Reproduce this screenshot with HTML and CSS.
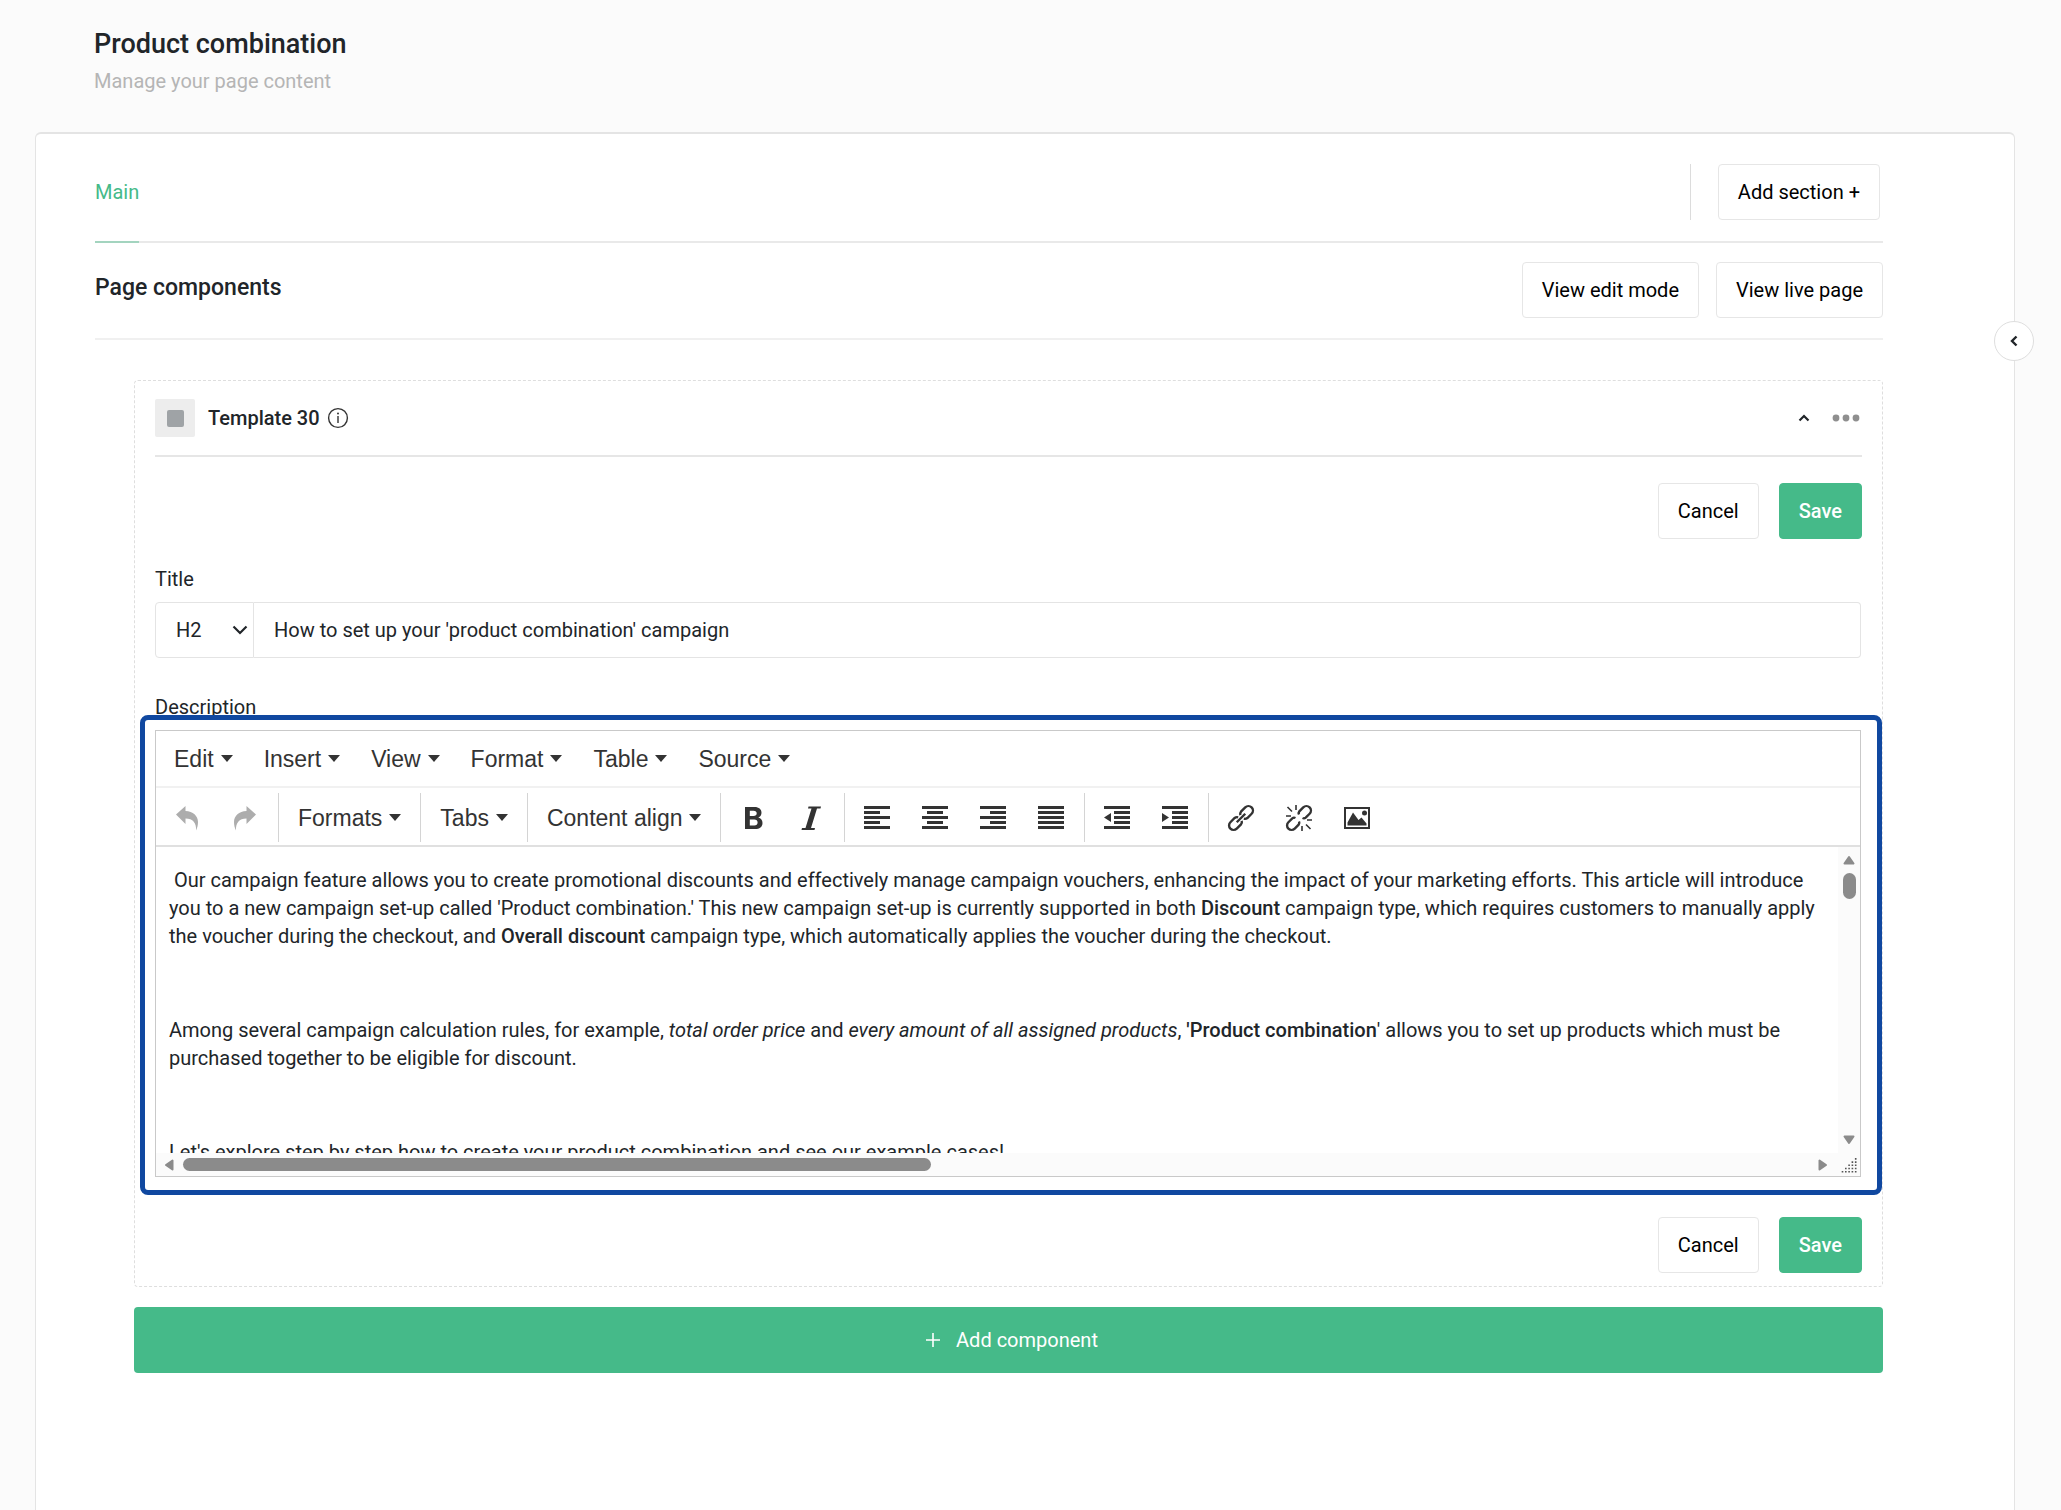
FILE: index.html
```html
<!DOCTYPE html>
<html lang="en">
<head>
<meta charset="utf-8">
<meta name="viewport" content="width=device-width, initial-scale=1">
<title>Product combination</title>
<link rel="stylesheet" href="styles.css">
</head>
<body>
<header class="page-header">
  <h1 class="page-title">Product combination</h1>
  <p class="page-subtitle">Manage your page content</p>
</header>

<main class="panel">
  <button class="panel-toggle" type="button" aria-label="Collapse panel">
    <svg width="8" height="12" viewBox="0 0 8 12"><path d="M6.500 1.500 2 6l4.500 4.500" fill="none" stroke="#212529" stroke-width="2.400"/></svg>
  </button>

  <div class="tabs">
    <a class="tab" href="#main">Main</a>
    <div class="tabs-action">
      <button class="btn" type="button">Add section +</button>
    </div>
  </div>

  <div class="section-head">
    <h2 class="section-title">Page components</h2>
    <div class="section-actions">
      <button class="btn" type="button">View edit mode</button>
      <button class="btn" type="button">View live page</button>
    </div>
  </div>

  <div class="components">
    <section class="card">
      <div class="card-head">
        <span class="card-icon"><span class="card-icon-fill"></span></span>
        <h3 class="card-title">Template 30</h3>
        <svg class="info" width="22" height="22" viewBox="0 0 22 22"><circle cx="11" cy="11" r="9.400" fill="none" stroke="#333" stroke-width="1.400"/><path d="M11 9v7" stroke="#333" stroke-width="1.400"/><circle cx="11" cy="6.400" r="1" fill="#333"/></svg>
        <div class="card-tools">
          <button class="tool" type="button" aria-label="Collapse"><svg width="12" height="8" viewBox="0 0 12 8"><path d="M1.500 6.500 6 2l4.500 4.500" fill="none" stroke="#212529" stroke-width="2.200"/></svg></button>
          <button class="tool" type="button" aria-label="More"><svg width="28" height="8" viewBox="0 0 28 8"><g fill="#8f8f8f"><circle cx="4" cy="4" r="3.400"/><circle cx="14" cy="4" r="3.400"/><circle cx="24" cy="4" r="3.400"/></g></svg></button>
        </div>
      </div>

      <div class="actions">
        <button class="btn" type="button">Cancel</button>
        <button class="btn btn-primary" type="button">Save</button>
      </div>

      <label class="label" for="title">Title</label>
      <div class="title-field">
        <div class="select-wrap">
          <select class="select" aria-label="Heading level"><option>H2</option></select>
          <svg class="select-arrow" width="16" height="10" viewBox="0 0 16 10"><path d="M1.500 1.500 8 8l6.500-6.500" fill="none" stroke="#212529" stroke-width="2.200"/></svg>
        </div>
        <input class="input" id="title" type="text" value="How to set up your 'product combination' campaign">
      </div>

      <label class="label label-description" id="body-label">Description</label>
      <div class="editor">
        <div class="menubar">
          <button class="menu" type="button">Edit<i class="caret"></i></button>
          <button class="menu" type="button">Insert<i class="caret"></i></button>
          <button class="menu" type="button">View<i class="caret"></i></button>
          <button class="menu" type="button">Format<i class="caret"></i></button>
          <button class="menu" type="button">Table<i class="caret"></i></button>
          <button class="menu" type="button">Source<i class="caret"></i></button>
        </div>
        <div class="toolbar">
          <div class="group">
            <button class="icon-btn is-off" type="button" aria-label="Undo"><svg width="22" height="26" viewBox="0 0 22 26"><path d="M0 9.500 9.500 1v5C17 6.300 22 11 22 17c0 3-.7 6-2 8.500C20.500 18 17 13.500 9.500 13.500V19z"/></svg></button>
            <button class="icon-btn is-off" type="button" aria-label="Redo"><svg width="22" height="26" viewBox="0 0 22 26"><path d="M22 9.500 12.500 1v5C5 6.300 0 11 0 17c0 3 .7 6 2 8.500C1.500 18 5 13.500 12.500 13.500V19z"/></svg></button>
          </div>
          <div class="group"><button class="menu" type="button">Formats<i class="caret"></i></button></div>
          <div class="group"><button class="menu" type="button">Tabs<i class="caret"></i></button></div>
          <div class="group"><button class="menu" type="button">Content align<i class="caret"></i></button></div>
          <div class="group">
            <button class="icon-btn" type="button" aria-label="Bold"><svg width="26" height="26" viewBox="0 0 26 26"><path fill-rule="evenodd" d="M5 2h9.500c4.500 0 7 2.200 7 5.800 0 2.300-1.100 4-3.200 4.800 2.700.7 4.200 2.700 4.200 5.300 0 3.900-2.900 6.100-7.500 6.100H5zm4.800 3.700v5.300h3.700c2.100 0 3.200-.9 3.200-2.700s-1.100-2.600-3.200-2.600zm0 8.900v5.800h4.400c2.200 0 3.400-1 3.400-2.900s-1.200-2.900-3.400-2.900z"/></svg></button>
            <button class="icon-btn" type="button" aria-label="Italic"><svg width="26" height="26" viewBox="0 0 26 26"><path d="M10.500 1.500H23l-.5 2h-3.500L13 23h4l-.5 2H3.500l.5-2h3.500l6-19.500h-3.500z"/></svg></button>
          </div>
          <div class="group">
            <button class="icon-btn" type="button" aria-label="Align left"><svg width="26" height="24" viewBox="0 0 26 24"><path d="M0 0h26v3H0zM0 5h16v3H0zM0 10h26v3H0zM0 15h16v3H0zM0 20h26v3H0z"/></svg></button>
            <button class="icon-btn" type="button" aria-label="Align center"><svg width="26" height="24" viewBox="0 0 26 24"><path d="M0 0h26v3H0zM5 5h16v3H5zM0 10h26v3H0zM5 15h16v3H5zM0 20h26v3H0z"/></svg></button>
            <button class="icon-btn" type="button" aria-label="Align right"><svg width="26" height="24" viewBox="0 0 26 24"><path d="M0 0h26v3H0zM10 5h16v3H10zM0 10h26v3H0zM10 15h16v3H10zM0 20h26v3H0z"/></svg></button>
            <button class="icon-btn" type="button" aria-label="Justify"><svg width="26" height="24" viewBox="0 0 26 24"><path d="M0 0h26v3H0zM0 5h26v3H0zM0 10h26v3H0zM0 15h26v3H0zM0 20h26v3H0z"/></svg></button>
          </div>
          <div class="group">
            <button class="icon-btn" type="button" aria-label="Decrease indent"><svg width="26" height="24" viewBox="0 0 26 24"><path d="M0 0h26v3H0zM10 5h16v3H10zM10 10h16v3H10zM10 15h16v3H10zM0 20h26v3H0zM7 7v9l-7-4.500z"/></svg></button>
            <button class="icon-btn" type="button" aria-label="Increase indent"><svg width="26" height="24" viewBox="0 0 26 24"><path d="M0 0h26v3H0zM10 5h16v3H10zM10 10h16v3H10zM10 15h16v3H10zM0 20h26v3H0zM0 7v9l7-4.500z"/></svg></button>
          </div>
          <div class="group">
            <button class="icon-btn" type="button" aria-label="Insert link"><svg class="line" width="28" height="28" viewBox="0 0 28 28"><g transform="rotate(-45 14 14)"><path d="M12.500 11.500a4 4 0 0 0-3-2H3.500a4.500 4.500 0 0 0 0 9H9.500a4 4 0 0 0 3-2M15.500 11.500a4 4 0 0 1 3-2H24.500a4.500 4.500 0 0 1 0 9H18.500a4 4 0 0 1-3-2M8 14h12"/></g></svg></button>
            <button class="icon-btn" type="button" aria-label="Remove link"><svg class="line" width="28" height="28" viewBox="0 0 28 28"><g transform="rotate(-45 14 14)"><path d="M11.500 11.500a3 3 0 0 0-2.500-2H3.500a4.500 4.500 0 0 0 0 9H9a3 3 0 0 0 2.500-2M16.500 11.500a3 3 0 0 1 2.500-2H24.500a4.500 4.500 0 0 1 0 9H19a3 3 0 0 1-2.500-2"/></g><path class="thin" d="M11 1v5M2.500 3l4.500 4.500M1 12h5M17 27v-5M25.500 25 21 20.500M27 16h-5"/></svg></button>
            <button class="icon-btn" type="button" aria-label="Insert image"><svg width="26" height="24" viewBox="0 0 26 24"><path fill-rule="evenodd" d="M0 1h26v22H0zm2 2v18h22V3z"/><path d="M3.500 19.500v-3L9 6.500l5.500 7.500 3-2.500 5 6v2z"/><circle cx="20.500" cy="7" r="2.500"/></svg></button>
          </div>
        </div>
        <div class="edit-area">
          <div class="content" role="textbox" aria-multiline="true" aria-labelledby="body-label" contenteditable="true" spellcheck="false">
            <p>&nbsp;Our campaign feature allows you to create promotional discounts and effectively manage campaign vouchers, enhancing the impact of your marketing efforts. This article will introduce you to a new campaign set-up called 'Product combination.' This new campaign set-up is currently supported in both <strong>Discount</strong> campaign type, which requires customers to manually apply the voucher during the checkout, and <strong>Overall discount</strong> campaign type, which automatically applies the voucher during the checkout.</p>
            <p>Among several campaign calculation rules, for example, <em>total order price</em> and <em>every amount of all assigned products</em>, <strong>'Product combination</strong>' allows you to set up products which must be purchased together to be eligible for discount.</p>
            <p>Let's explore step by step how to create your product combination and see our example cases!</p>
          </div>
          <div class="vbar">
            <svg width="12" height="10" viewBox="0 0 12 10"><path d="M6 2 10.500 8.500h-9z"/></svg>
            <span class="vthumb"></span>
            <svg class="vbar-down" width="12" height="10" viewBox="0 0 12 10"><path d="M6 8 1.500 1.500h9z"/></svg>
          </div>
          <div class="hbar">
            <svg width="10" height="12" viewBox="0 0 10 12"><path d="M2 6 8.500 1.500v9z"/></svg>
            <span class="htrack"><span class="hthumb"></span></span>
            <svg width="10" height="12" viewBox="0 0 10 12"><path d="M8 6 1.500 1.500v9z"/></svg>
          </div>
          <div class="grip"><svg width="16" height="16" viewBox="0 0 16 16"><path d="M14.700 15.500V0M11.400 15.500V3M8.100 15.500V6M4.800 15.500V9M1.500 15.500V13"/></svg></div>
        </div>
      </div>

      <div class="actions actions-bottom">
        <button class="btn" type="button">Cancel</button>
        <button class="btn btn-primary" type="button">Save</button>
      </div>
    </section>

    <button class="add-component" type="button">
      <svg width="16" height="16" viewBox="0 0 16 16"><path d="M8 1v14M1 8h14" stroke="#fff" stroke-width="1.600"/></svg>
      Add component
    </button>
  </div>
</main>
</body>
</html>
```
FILE: styles.css
```css
* {
  box-sizing: border-box;
}

body {
  margin: 0;
  min-height: 100vh;
  display: flex;
  flex-direction: column;
  background: #fbfbfb;
  color: #212529;
  font: 400 20px/28px Roboto, "Liberation Sans", sans-serif;
}

h1,
h2,
h3,
p {
  margin: 0;
}

button,
input,
select {
  font: inherit;
  color: inherit;
}

button {
  padding: 0;
  border: 0;
  background: none;
}

svg {
  display: block;
  flex: none;
}

.page-header {
  padding: 28px 94px 0;
  height: 132px;
}

.page-title {
  font-size: 27px;
  font-weight: 500;
  line-height: 32px;
}

.page-subtitle {
  margin-top: 7px;
  color: #b5b5b5;
}

.panel {
  position: relative;
  flex: 1;
  margin: 0 46px 0 35px;
  padding: 0 131px 0 59px;
  border: 1px solid #e4e4e4;
  border-top-width: 2px;
  border-bottom: 0;
  border-radius: 6px 6px 0 0;
  background: #fff;
}

.panel-toggle {
  position: absolute;
  top: 187px;
  right: -20px;
  width: 40px;
  height: 40px;
  display: grid;
  place-items: center;
  border: 1px solid #dedede;
  border-radius: 50%;
  background: #fff;
}

.btn {
  height: 56px;
  padding: 0 19px;
  border: 1px solid #e6e6e6;
  border-radius: 4px;
  background: #fff;
  color: #000;
}

.btn-primary {
  border-color: #45ba89;
  background: #45ba89;
  color: #fff;
  font-weight: 500;
}

.tabs {
  display: flex;
  justify-content: space-between;
  align-items: flex-start;
  padding-top: 30px;
  border-bottom: 2px solid #e9e9e9;
}

.tab {
  height: 79px;
  margin-bottom: -2px;
  padding-top: 14px;
  border-bottom: 2px solid #a3d4bf;
  color: #45ba89;
  text-decoration: none;
}

.tabs-action {
  padding: 0 3px 0 27px;
  border-left: 1px solid #dcdcdc;
}

.section-head {
  display: flex;
  justify-content: space-between;
  padding: 19px 0 20px;
  border-bottom: 2px solid #f0f0f0;
}

.section-title {
  padding-top: 12px;
  font-size: 23px;
  font-weight: 500;
  line-height: 28px;
}

.section-actions,
.actions {
  display: flex;
  gap: 17px;
}

.components {
  padding: 40px 0 0 39px;
}

.card {
  padding: 18px 20px 13px;
  border: 1px dashed #dedede;
  border-radius: 4px;
}

.card-head {
  display: flex;
  align-items: center;
  height: 58px;
  padding-bottom: 18px;
  border-bottom: 2px solid #e6e6e6;
}

.card-icon {
  width: 40px;
  height: 38px;
  display: grid;
  place-items: center;
  border-radius: 2px;
  background: #ededed;
}

.card-icon-fill {
  width: 17px;
  height: 17px;
  border-radius: 2px;
  background: #9fa3a6;
}

.card-title {
  margin: 0 7px 0 13px;
  font-size: 20px;
  font-weight: 500;
}

.card-tools {
  margin-left: auto;
  padding-right: 2px;
  display: flex;
  align-items: center;
  gap: 22px;
}

.actions {
  justify-content: flex-end;
  gap: 20px;
  margin-top: 26px;
}

.label {
  display: block;
  margin-top: 26px;
}

.title-field {
  display: flex;
  height: 56px;
  margin: 9px 1px 0 0;
}

.select-wrap {
  position: relative;
  width: 99px;
}

.select {
  width: 100%;
  height: 100%;
  padding: 0 20px;
  border: 1px solid #e4e4e4;
  border-radius: 4px 0 0 4px;
  background: #fff;
  appearance: none;
}

.select-arrow {
  position: absolute;
  top: 23px;
  right: 6px;
  pointer-events: none;
}

.input {
  flex: 1;
  min-width: 0;
  padding: 0 20px;
  border: 1px solid #e4e4e4;
  border-left: 0;
  border-radius: 0 4px 4px 0;
  background: #fff;
}

.label-description {
  margin-top: 35px;
}

.editor {
  position: relative;
  margin: 9px 1px 0 0;
  border: 1px solid #c9c9c9;
  font-family: "Liberation Sans", Arial, sans-serif;
  color: #333;
}

.editor::after {
  content: "";
  position: absolute;
  inset: -16px -22px -19px -16px;
  border: 5px solid #1048a0;
  border-radius: 8px;
  pointer-events: none;
}

.menubar {
  display: flex;
  gap: 31px;
  height: 57px;
  padding: 0 18px;
  border-bottom: 2px solid #f1f1f1;
}

.menu {
  display: flex;
  align-items: center;
  gap: 7px;
  font-size: 23px;
}

.caret {
  border: 6px solid transparent;
  border-top: 7px solid #333;
  border-bottom: 0;
}

.toolbar {
  display: flex;
  height: 59px;
  padding: 5px 0 3px;
  border-bottom: 2px solid #e0e0e0;
}

.group {
  display: flex;
  padding: 0 4px 0 3px;
}

.group + .group {
  border-left: 1px solid #d4d4d4;
}

.group:first-child {
  padding-left: 2px;
}

.group .menu {
  padding: 0 15px 0 16px;
}

.icon-btn {
  width: 58px;
  display: grid;
  place-items: center;
}

.icon-btn svg {
  fill: #333;
}

.icon-btn.is-off svg {
  fill: #adadad;
}

.icon-btn svg.line {
  fill: none;
  stroke: #333;
  stroke-width: 2.4px;
}

.line .thin {
  stroke-width: 1.6px;
}

.edit-area {
  display: grid;
  grid-template: 306px 23px / 1fr 22px;
}

.content {
  overflow: hidden;
  padding: 19px 10px 0 13px;
  outline: 0;
  background: #fff;
  color: #212529;
  font-family: Roboto, "Liberation Sans", sans-serif;
}

.content p + p {
  margin-top: 66px;
}

.content strong {
  font-weight: 500;
}

.vbar,
.hbar,
.grip {
  display: flex;
  align-items: center;
  background: #fbfbfb;
  fill: #8b8b8b;
  stroke: #8b8b8b;
  stroke-width: 2px;
  stroke-linejoin: round;
}

.vbar {
  flex-direction: column;
  padding: 8px 0;
}

.vthumb {
  width: 13px;
  height: 26px;
  margin-top: 8px;
  border-radius: 7px;
  background: #8b8b8b;
}

.vbar-down {
  margin-top: auto;
}

.hbar {
  gap: 9px;
  padding: 0 10px 0 8px;
}

.htrack {
  flex: 1;
}

.hthumb {
  display: block;
  width: 46%;
  height: 13px;
  border-radius: 7px;
  background: #8b8b8b;
}

.grip {
  justify-content: center;
  stroke: #555;
  stroke-width: 1.6px;
  stroke-dasharray: 1.6 1.6;
}

.actions-bottom {
  margin-top: 40px;
}

.add-component {
  display: flex;
  justify-content: center;
  align-items: center;
  gap: 15px;
  width: 100%;
  height: 66px;
  margin-top: 20px;
  padding-left: 6px;
  border-radius: 4px;
  background: #45ba89;
  color: #fff;
}
```
